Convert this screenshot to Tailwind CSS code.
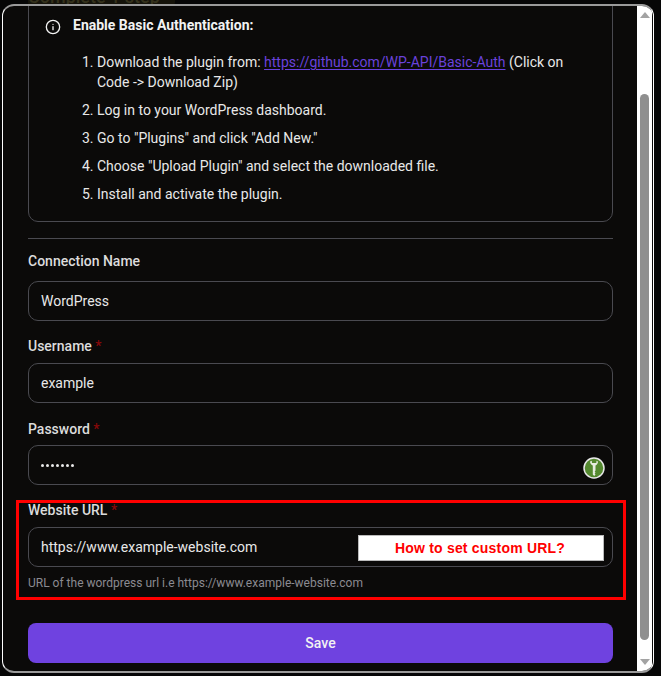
<!DOCTYPE html>
<html lang="en">
<head>
<meta charset="utf-8"/>
<meta content="width=device-width, initial-scale=1" name="viewport"/>
<title>WordPress connection</title>
<script src="https://cdn.jsdelivr.net/npm/@tailwindcss/browser@4"></script>
</head>
<body class="bg-[#060606] font-['Roboto',sans-serif] text-sm text-[#e8e8e8] overflow-hidden">
<div class="relative w-[661px] h-[676px] pl-[2px] pt-[4px] overflow-hidden">
  <!-- page behind the modal, only its top edge shows -->
  <span class="absolute left-[28px] -top-[14px] w-[147px] h-[22px] rounded-b-[6px] bg-[#15130a] text-lg leading-[22px] font-medium text-[#34311c]">Complete 1 step</span>

  <div class="relative flex w-[652px] h-[669px] rounded-[12px] overflow-hidden border-t-2 border-b-2 border-l border-r border-t-[#9a9a9a] border-b-[#9a9a9a] border-l-white border-r-white bg-[#0b0a09]">
    <main class="w-[634px] shrink-0 overflow-hidden pl-[25px] pr-[24px]">
      <!-- instructions card -->
      <section class="-mt-[20px] rounded-[10px] border border-[#4a4a50] pt-[28px] pb-[17px] pl-[16px] pr-[16px]">
        <div class="flex items-center gap-[12px] h-[20px] font-bold text-[#f2f2f2]">
          <svg class="mt-[4px] shrink-0" width="16" height="16" viewBox="0 0 24 24" fill="none" stroke="#f2f2f2" stroke-width="2" stroke-linecap="round"><circle cx="12" cy="12" r="10"/><path d="M12 16v-4.500"/><path d="M12 8h.01"/></svg>
          <span>Enable Basic Authentication:</span>
        </div>
        <ol class="mt-[17px] ml-[52px] list-decimal flex flex-col gap-2 leading-[20px] text-[#e8e8e8]">
          <li>Download the plugin from: <a class="text-[#6a42dc] underline underline-offset-2" href="#">https://github.com/WP-API/Basic-Auth</a> (Click on Code -&gt; Download Zip)</li>
          <li>Log in to your WordPress dashboard.</li>
          <li>Go to "Plugins" and click "Add New."</li>
          <li>Choose "Upload Plugin" and select the downloaded file.</li>
          <li>Install and activate the plugin.</li>
        </ol>
      </section>

      <hr class="mt-[16px] border-[#4a4a50]"/>

      <label class="block mt-[12px] leading-[20px] font-medium text-[#dcdcdc]">Connection Name</label>
      <div class="mt-[10px] flex items-center h-[40px] rounded-[10px] border border-[#4a4a50] px-3">WordPress</div>

      <label class="block mt-[15px] leading-[20px] font-medium text-[#dcdcdc]">Username <span class="text-[#880808]">*</span></label>
      <div class="mt-[7px] flex items-center h-[40px] rounded-[10px] border border-[#4a4a50] px-3">example</div>

      <label class="block mt-[16px] leading-[20px] font-medium text-[#dcdcdc]">Password <span class="text-[#880808]">*</span></label>
      <div class="relative mt-[6px] flex items-center h-[40px] rounded-[10px] border border-[#4a4a50] px-3">
        <span class="flex gap-[2px]">
          <i class="size-[3px] rounded-full bg-[#e8e8e8]"></i><i class="size-[3px] rounded-full bg-[#e8e8e8]"></i><i class="size-[3px] rounded-full bg-[#e8e8e8]"></i><i class="size-[3px] rounded-full bg-[#e8e8e8]"></i><i class="size-[3px] rounded-full bg-[#e8e8e8]"></i><i class="size-[3px] rounded-full bg-[#e8e8e8]"></i><i class="size-[3px] rounded-full bg-[#e8e8e8]"></i>
        </span>
        <svg class="absolute right-[7px] top-[11px]" width="22" height="22" viewBox="0 0 22 22">
          <circle cx="11" cy="11" r="10" fill="#54892f" stroke="#e8e8e8" stroke-width="1.500"/>
          <path d="M7 4.500c0 2 1.500 3.500 2.800 4v9l1.400 1.500 1.300-1.500-.8-1 .8-1-.8-1 .8-1v-5c1.300-.5 2.500-2 2.500-4l-1.500-.8-.2 2.300h-4.300l-.2-2.300z" fill="#e6ecdf"/>
        </svg>
      </div>

      <label class="block mt-[15px] leading-[20px] font-medium text-[#dcdcdc]">Website URL <span class="text-[#880808]">*</span></label>
      <div class="relative mt-[7px] flex items-center h-[40px] rounded-[10px] border border-[#4a4a50] px-3">
        https://www.example-website.com
        <div class="absolute right-[8px] top-[7px] flex items-center justify-center w-[246px] h-[26px] pb-[1px] pr-[2px] bg-white border border-[#bbbbbb] font-['Liberation_Sans',sans-serif] font-bold text-[#ff0000] tracking-[0.2px]">How to set custom URL?</div>
      </div>
      <p class="mt-[8px] text-xs leading-[16px] text-[#8b8b91]">URL of the wordpress url i.e https://www.example-website.com</p>

      <button class="mt-[32px] w-full h-[40px] rounded-[8px] bg-[#6f42e0] font-medium text-[#f2f2f2]">Save</button>
    </main>

    <!-- scrollbar -->
    <div class="relative w-[15px] shrink-0 bg-white">
      <div class="absolute left-[3px] top-[6px] size-0 border-x-[5px] border-b-[6px] border-x-transparent border-b-[#a3a3a3]"></div>
      <div class="absolute left-[3px] top-[88px] w-[9px] h-[546px] rounded-full bg-[#8f8f8f]"></div>
      <div class="absolute left-[3px] bottom-[6px] size-0 border-x-[5px] border-t-[6px] border-x-transparent border-t-[#a3a3a3]"></div>
    </div>
  </div>

  <!-- annotation drawn over the form -->
  <div class="absolute left-[16px] top-[500px] w-[610px] h-[100px] border-[3px] border-[#ff0000] pointer-events-none"></div>
</div>
</body>
</html>
